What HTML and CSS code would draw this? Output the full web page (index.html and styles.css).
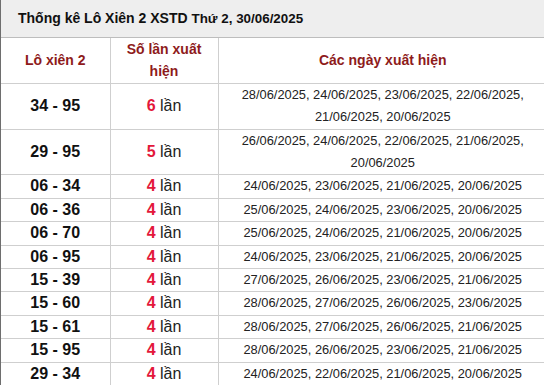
FILE: index.html
```html
<!DOCTYPE html>
<html lang="vi">
<head>
<meta charset="utf-8">
<title>Thống kê Lô Xiên 2 XSTD</title>
<link rel="stylesheet" href="styles.css">
</head>
<body>
<div class="panel">
  <div class="title"><b>Thống kê Lô Xiên 2 XSTD</b> <span class="date">Thứ 2, 30/06/2025</span></div>
  <table class="stats">
    <colgroup><col class="c1"><col class="c2"><col class="c3"></colgroup>
    <thead>
      <tr><th>Lô xiên 2</th><th>Số lần xuất hiện</th><th>Các ngày xuất hiện</th></tr>
    </thead>
    <tbody>
      <tr><td class="pair">34 - 95</td><td class="cnt"><b>6</b> lần</td><td class="days">28/06/2025, 24/06/2025, 23/06/2025, 22/06/2025,<br>21/06/2025, 20/06/2025</td></tr>
      <tr><td class="pair">29 - 95</td><td class="cnt"><b>5</b> lần</td><td class="days">26/06/2025, 24/06/2025, 22/06/2025, 21/06/2025,<br>20/06/2025</td></tr>
      <tr><td class="pair">06 - 34</td><td class="cnt"><b>4</b> lần</td><td class="days">24/06/2025, 23/06/2025, 21/06/2025, 20/06/2025</td></tr>
      <tr><td class="pair">06 - 36</td><td class="cnt"><b>4</b> lần</td><td class="days">25/06/2025, 24/06/2025, 23/06/2025, 20/06/2025</td></tr>
      <tr><td class="pair">06 - 70</td><td class="cnt"><b>4</b> lần</td><td class="days">25/06/2025, 24/06/2025, 21/06/2025, 20/06/2025</td></tr>
      <tr><td class="pair">06 - 95</td><td class="cnt"><b>4</b> lần</td><td class="days">24/06/2025, 23/06/2025, 21/06/2025, 20/06/2025</td></tr>
      <tr><td class="pair">15 - 39</td><td class="cnt"><b>4</b> lần</td><td class="days">27/06/2025, 26/06/2025, 23/06/2025, 21/06/2025</td></tr>
      <tr><td class="pair">15 - 60</td><td class="cnt"><b>4</b> lần</td><td class="days">28/06/2025, 27/06/2025, 26/06/2025, 23/06/2025</td></tr>
      <tr><td class="pair">15 - 61</td><td class="cnt"><b>4</b> lần</td><td class="days">28/06/2025, 27/06/2025, 26/06/2025, 21/06/2025</td></tr>
      <tr><td class="pair">15 - 95</td><td class="cnt"><b>4</b> lần</td><td class="days">28/06/2025, 26/06/2025, 23/06/2025, 21/06/2025</td></tr>
      <tr><td class="pair">29 - 34</td><td class="cnt"><b>4</b> lần</td><td class="days">24/06/2025, 22/06/2025, 21/06/2025, 20/06/2025</td></tr>
    </tbody>
  </table>
</div>
</body>
</html>
```

FILE: styles.css
```css
html, body {
  margin: 0;
  padding: 0;
  overflow: hidden;
  background: #fff;
}
body {
  font-family: "Liberation Sans", Arial, sans-serif;
  color: #111;
}
.panel {
  width: 546px;
  border-left: 1px solid #6e6e6e;
}
.title {
  height: 37px;
  line-height: 37px;
  padding-left: 17px;
  background: #eeeeee;
  border-bottom: 1px solid #bdbdbd;
  font-size: 14px;
  color: #111;
}
.title .date {
  font-size: 13.4px;
  font-weight: 600;
}
.stats {
  width: 100%;
  border-collapse: collapse;
  table-layout: fixed;
}
.c1 { width: 109px; }
.c2 { width: 108px; }
.stats th,
.stats td {
  padding: 0;
  line-height: 22.4px;
  text-align: center;
  vertical-align: middle;
  border-bottom: 1px solid #cfcfcf;
  border-left: 1px solid #cfcfcf;
}
.stats th:first-child,
.stats td:first-child {
  border-left: 0;
}
.stats th {
  font-size: 14px;
  font-weight: bold;
  color: #8e1b1b;
}
.stats th:nth-child(2) {
  padding: 0 14px;
}
.pair {
  font-size: 16px;
  font-weight: bold;
  color: #111;
}
.cnt {
  font-size: 16px;
  color: #222;
}
.cnt b {
  color: #e3173a;
}
.days {
  font-size: 12.85px;
  color: #222;
}
```
